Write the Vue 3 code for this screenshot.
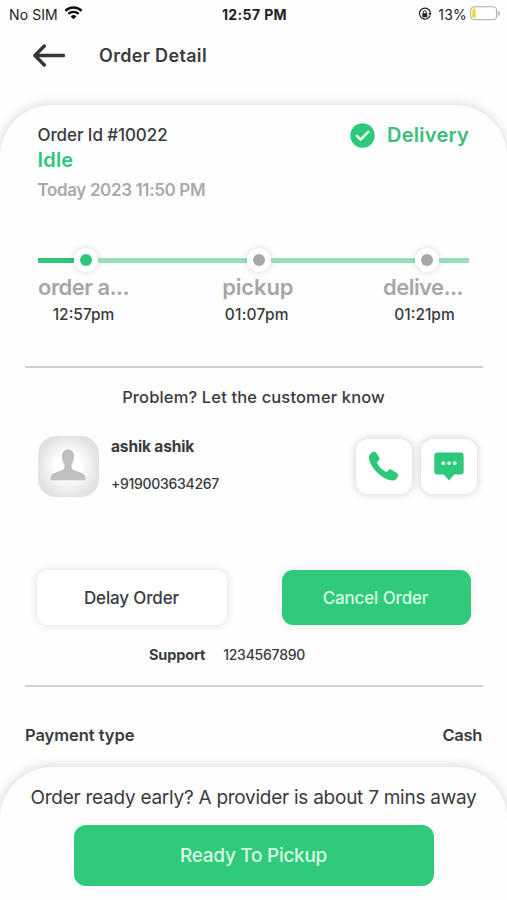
<script setup>
const steps = [
  { label: 'order a...', time: '12:57pm', kind: 'first' },
  { label: 'pickup', time: '01:07pm', kind: 'middle' },
  { label: 'delive...', time: '01:21pm', kind: 'last' }
]
</script>

<template>
  <div class="screen">
    <div class="status">
      <div class="carrier">
        <span>No SIM</span>
        <svg width="19" height="14" viewBox="0 0 19 14">
          <path d="M1.4 4.9a11.6 11.6 0 0 1 16.2 0" fill="none" stroke="#111" stroke-width="2.5" />
          <path d="M4.3 7.9a7.5 7.5 0 0 1 10.4 0" fill="none" stroke="#111" stroke-width="2.3" />
          <path d="M9.5 13.3 6.6 10.4a4.2 4.2 0 0 1 5.8 0z" fill="#111" />
        </svg>
      </div>
      <strong class="clock">12:57 PM</strong>
      <div class="power">
        <svg class="lock" width="14" height="14" viewBox="0 0 14 14">
          <path d="M11.2 3.1a5.5 5.5 0 1 0 .9 5.4" fill="none" stroke="#222" stroke-width="1.2" />
          <path d="M10.3 6h3.3L12 8.5z" fill="#222" />
          <path d="M11.1 2.7a5.5 5.5 0 0 1 1.1 4" fill="none" stroke="#222" stroke-width="1.2" />
          <rect x="4.3" y="6.3" width="5" height="3.9" rx=".6" fill="#222" />
          <path d="M5.3 6.5V5.2a1.5 1.5 0 0 1 3 0v1.3" fill="none" stroke="#222" stroke-width="1" />
        </svg>
        <span>13%</span>
        <svg width="30" height="15" viewBox="0 0 30 15">
          <rect x=".7" y=".8" width="26" height="13" rx="3.8" fill="#fff" stroke="#aaa" stroke-width="1.1" />
          <rect x="2.4" y="2.6" width="3.2" height="9.4" rx="1.4" fill="#f5d426" />
          <path d="M28.2 5v4.8c1-.4 1.6-1.3 1.6-2.4S29.2 5.4 28.2 5z" fill="#aaa" />
        </svg>
      </div>
    </div>

    <header class="bar">
      <svg width="32" height="23" viewBox="0 0 32 23">
        <path d="M11.3 2 1.9 11.5 11.3 21M2.5 11.5h28" fill="none" stroke="#35363a" stroke-width="3.4" stroke-linecap="round" stroke-linejoin="round" />
      </svg>
      <h1>Order Detail</h1>
    </header>

    <main class="card">
      <section class="summary">
        <div>
          <div class="order-id">Order Id #10022</div>
          <div class="state">Idle</div>
          <div class="date">Today 2023 11:50 PM</div>
        </div>
        <div class="method">
          <svg width="25" height="25" viewBox="0 0 25 25">
            <circle cx="12.5" cy="12.5" r="12.2" fill="#2dc97a" />
            <path d="m6.8 12.8 3.8 3.8 7.6-7.7" fill="none" stroke="#e9fff2" stroke-width="2.5" stroke-linecap="round" stroke-linejoin="round" />
          </svg>
          <span>Delivery</span>
        </div>
      </section>

      <div class="track">
        <i class="seg done"></i><i class="node active"></i>
        <i class="seg mid"></i><i class="node"></i>
        <i class="seg far"></i><i class="node"></i>
        <i class="seg end"></i>
      </div>
      <div class="steps">
        <div v-for="s in steps" :key="s.kind" class="step" :class="s.kind">
          <div class="label">{{ s.label }}</div>
          <div class="time">{{ s.time }}</div>
        </div>
      </div>

      <hr />

      <p class="problem">Problem? Let the customer know</p>
      <section class="customer">
        <div class="avatar">
          <svg width="36" height="32" viewBox="0 0 36 32">
            <path d="M18 .5c-3.7 0-6 2.600-6 6.500 0 3.500.8 6.300 2.400 8.300v2.800c0 1.800-1.300 2.800-3.400 3.500l-5.300 1.900C2.300 24.700.5 26.500.5 29.500v1.700h35v-1.700c0-3-1.800-4.800-5.200-6L25 21.600c-2.100-.7-3.400-1.700-3.400-3.500v-2.800C23.200 13.300 24 10.500 24 7c0-3.900-2.300-6.500-6-6.500z" fill="#bfbfbf" />
          </svg>
        </div>
        <div class="who">
          <div class="name">ashik ashik</div>
          <div class="phone">+919003634267</div>
        </div>
        <button class="contact call" aria-label="Call">
          <svg width="31" height="31" viewBox="0 0 31 31">
            <path d="M3.200 1.900C5 .4 7.600.5 8.700 2.400l2.500 4.200c.6 1 .5 1.900-.3 2.700L9.500 10.700c-.5.5-.5 1-.1 1.800 1.900 3.600 4.500 6.100 8 8 .8.400 1.400.4 1.900-.1l1.300-1.400c.8-.8 1.700-.9 2.700-.3l5 2.900c1.900 1.100 2.200 3.200.9 5.200-1.900 2.900-5 3.300-8.100 2.300C12.400 26.400 3.500 17.300 1.100 8.700.4 6 1 3.700 3.200 1.900z" fill="#2dc97a" />
          </svg>
        </button>
        <button class="contact" aria-label="Message">
          <svg width="30" height="29" viewBox="0 0 30 29">
            <path d="M3.600.5h22.800a3.300 3.300 0 0 1 3.300 3.300v15.400a3.300 3.300 0 0 1-3.300 3.300h-6.200L15 28.500l-5.200-6H3.600a3.300 3.300 0 0 1-3.300-3.300V3.800A3.300 3.300 0 0 1 3.600.5z" fill="#2dc97a" />
            <g fill="#dcfbe9"><circle cx="9.300" cy="11.200" r="1.900" /><circle cx="15" cy="11.200" r="1.900" /><circle cx="20.700" cy="11.200" r="1.900" /></g>
          </svg>
        </button>
      </section>

      <section class="actions">
        <button class="btn plain">Delay Order</button>
        <button class="btn green">Cancel Order</button>
      </section>
      <p class="support"><b>Support</b><span>1234567890</span></p>

      <hr />

      <div class="payment"><span>Payment type</span><span class="cash">Cash</span></div>
    </main>

    <footer class="sheet">
      <p class="early">Order ready early? A provider is about 7 mins away</p>
      <button class="ready">Ready To Pickup</button>
    </footer>
  </div>
</template>

<style>
body { margin: 0; background: #fefefe; }
</style>

<style scoped>
* { box-sizing: border-box; }
.screen {
  display: flex;
  flex-direction: column;
  width: 507px;
  height: 900px;
  overflow: hidden;
  background: #fefefe;
  color: #3a3b3f;
  font-family: Inter, sans-serif;
  font-weight: 500;
  white-space: nowrap;
}
p, h1 { margin: 0; }
svg { display: block; flex: none; }
button { border: 0; padding: 0; font: inherit; color: inherit; }
.status {
  display: grid;
  grid-template-columns: 1fr auto 1fr;
  align-items: center;
  height: 28px;
  padding: 0 7px 0 9px;
  font-size: 14px;
  font-weight: 400;
  color: #222;
}
.carrier { display: flex; align-items: center; gap: 6px; letter-spacing: .1px; }
.carrier svg { margin-bottom: 2px; }
.clock { font-weight: 700; letter-spacing: .38px; }
.power { display: flex; align-items: center; justify-content: flex-end; letter-spacing: .2px; }
.power svg:last-child { margin-left: 3px; margin-bottom: 2px; }
.lock { margin-right: 6px; }
.bar { display: flex; align-items: center; gap: 34px; height: 54px; padding-left: 33px; }
h1 { font-size: 18px; font-weight: 600; letter-spacing: .33px; }
.card {
  flex: 1;
  min-height: 0;
  margin-top: 22.5px;
  padding: 18.5px 24px 0 25px;
  border-radius: 52px 52px 0 0;
  background: #fefefe;
  box-shadow: 0 -1px 12px rgba(0, 0, 0, .15);
}
.summary { display: flex; justify-content: space-between; padding: 0 14px 0 12.5px; }
.order-id { height: 24px; line-height: 24px; font-size: 17px; letter-spacing: -.09px; }
.state { height: 26px; line-height: 26px; font-size: 20px; font-weight: 600; letter-spacing: .2px; color: #2fc67a; }
.date { height: 34px; line-height: 34px; font-size: 17px; font-weight: 600; letter-spacing: -.37px; color: #a9a9ab; }
.method { display: flex; align-items: center; gap: 12px; height: 24px; font-size: 20px; font-weight: 600; letter-spacing: .25px; color: #3bbd7b; }
.track { display: flex; align-items: center; height: 24px; margin: 41px 0 0 12.5px; }
.seg { height: 5px; background: #97dfbc; }
.done { width: 36px; background: #35c47a; }
.mid { width: 149px; }
.far { width: 144px; }
.end { width: 30px; }
.node {
  display: flex;
  align-items: center;
  justify-content: center;
  width: 24px;
  height: 24px;
  border-radius: 50%;
  background: #fff;
  box-shadow: 0 0 7px rgba(0, 0, 0, .15);
}
.node::before { content: ''; width: 12px; height: 12px; border-radius: 50%; background: #a6a6a6; }
.node.active::before { background: #2dc97a; }
.steps { display: grid; grid-template-columns: 92px 1fr 92px; margin: 0 14px 0 12.5px; height: 94px; text-align: center; }
.middle { padding-left: 9px; }
.label { height: 30px; line-height: 31px; font-size: 22px; font-weight: 600; letter-spacing: -.55px; color: #a6a6a9; }
.middle .label { letter-spacing: -.15px; }
.time { height: 26px; line-height: 26px; font-size: 15.5px; }
.middle .time { letter-spacing: .25px; margin-left: -2px; }
.last .time { margin-left: 3px; }
hr { height: 2px; margin: 0; border: 0; background: #cfcfcf; }
.problem { height: 58px; line-height: 58px; padding-right: 1px; text-align: center; font-size: 16.5px; letter-spacing: .14px; }
.customer { display: flex; padding: 10px 6px 0 12.5px; }
.avatar {
  display: flex;
  align-items: center;
  justify-content: center;
  width: 61px;
  height: 61px;
  padding-bottom: 3px;
  border-radius: 18px;
  background: radial-gradient(circle, #fff 30%, #f1f1f1 50%, #e2e2e2 72%);
}
.who { flex: 1; padding-left: 12.5px; }
.name { height: 22px; line-height: 22px; font-size: 15.5px; font-weight: 700; letter-spacing: -.14px; }
.phone { height: 52px; line-height: 52px; font-size: 14px; letter-spacing: -.3px; }
.contact {
  display: flex;
  align-items: center;
  justify-content: center;
  width: 56px;
  height: 55px;
  margin: 3px 0 0 9px;
  border-radius: 12px;
  background: #fff;
  box-shadow: 0 0 9px rgba(0, 0, 0, .2);
}
.call { padding-right: 1px; }
.actions { display: flex; justify-content: space-between; margin-top: 60px; padding: 0 12.5px 0 12px; }
.btn { height: 55px; border-radius: 11px; font-size: 17px; letter-spacing: -.14px; }
.plain { width: 190px; padding-right: 1px; background: #fff; box-shadow: 0 0 10px rgba(0, 0, 0, .12); }
.green { width: 189px; padding-right: 1px; background: #2fca7a; color: #d9fbe8; box-shadow: 0 0 10px rgba(0, 0, 0, .07); }
.support { display: flex; gap: 18px; height: 60px; line-height: 59px; padding-left: 124px; font-size: 14.5px; }
.support b { font-weight: 700; letter-spacing: -.15px; }
.support span { font-size: 14px; letter-spacing: -.24px; }
.payment { display: flex; justify-content: space-between; height: 97px; line-height: 97px; padding-right: 1px; font-size: 16.5px; font-weight: 600; letter-spacing: -.05px; }
.cash { letter-spacing: -.3px; }
.sheet {
  position: relative;
  display: flex;
  flex-direction: column;
  align-items: center;
  height: 133.5px;
  flex: none;
  border-radius: 52px 52px 0 0;
  background: #fefefe;
  box-shadow: 0 -1px 12px rgba(0, 0, 0, .15);
}
.card { margin-bottom: -133.5px; }
.early { height: 58px; line-height: 61px; font-size: 19px; font-weight: 400; letter-spacing: -.26px; }
.ready { width: 360px; height: 61px; border-radius: 12px; background: #2fca7a; color: #d9fbe8; font-size: 19px; letter-spacing: -.28px; }
</style>
